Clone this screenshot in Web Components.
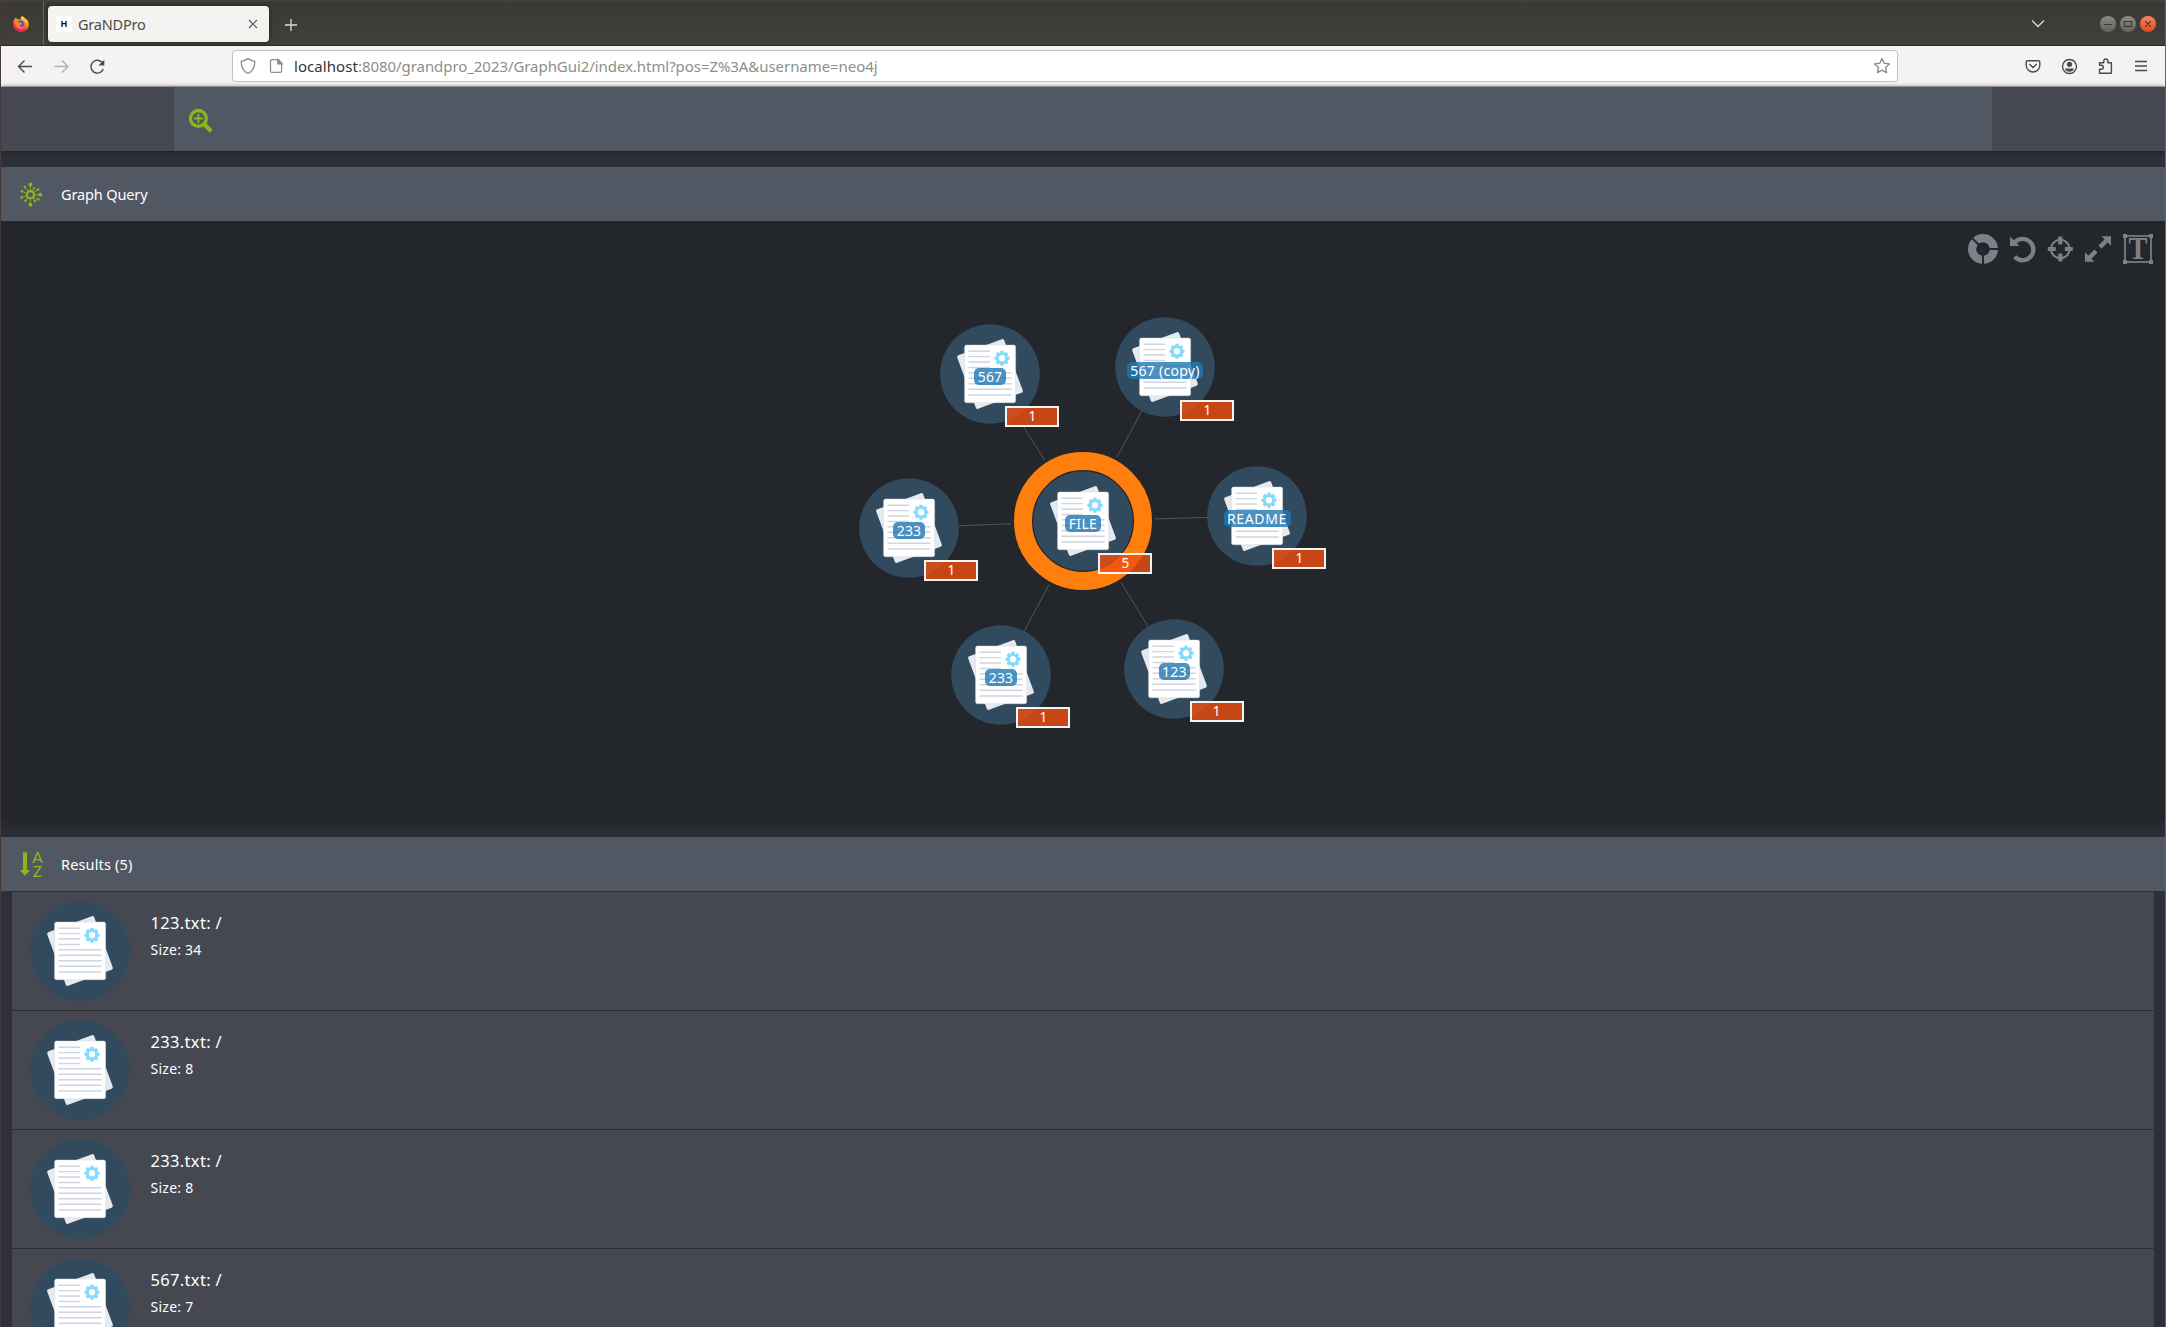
<!DOCTYPE html>
<html lang="en"><head><meta charset="utf-8"><title>GraNDPro</title>
<style>
html,body{margin:0;height:1327px;overflow:hidden;background:#2d3038}
body{font-family:"Noto Sans","Open Sans",sans-serif;font-size:14px;color:#fff}
</style></head><body>
<grand-app></grand-app>
<script>
const define=(name,html,setup)=>customElements.define(name,class extends HTMLElement{
  constructor(){super();this.attachShadow({mode:'open'})}
  connectedCallback(){this.shadowRoot.innerHTML=typeof html==='function'?html(this):html;if(setup)setup(this)}
});

/* One line of text, tracked to fill the width given in its w attribute. */
define('fit-text','<style>:host{display:inline-block;white-space:pre;line-height:20px}span{display:inline-block}</style><span><slot></slot></span>',el=>{
  const w=+el.getAttribute('w');if(!w)return;
  const s=el.shadowRoot.querySelector('span'),n=el.textContent.length;
  const real=s.getBoundingClientRect().width;
  s.style.letterSpacing=((w-real)/n)+'px';
});

const gear=()=>{let t='';for(let i=0;i<8;i++)t+=`<rect x="60.2" y="26.8" width="3.6" height="4" rx=".8" transform="rotate(${i*45} 62 34.3)"/>`;return t};
define('doc-icon',`<style>:host{display:block;width:100px;height:100px}svg{display:block}</style>
<svg width="100" height="100" viewBox="0 0 100 100"><circle cx="50" cy="50" r="49.8" fill="#324a5e"/>
<rect x="25" y="21.5" width="50" height="57" rx="1.8" fill="#e6e9ee" transform="rotate(-20.3 50 50)"/>
<rect x="24.6" y="21.1" width="51" height="57.6" rx="1.8" fill="#fff" stroke="#d5dbe2" stroke-width=".5"/>
<path d="M28.5 27.2H50M28.5 32.6H50M28.5 38H50M28.5 43.5H50M28.5 48.8H71.6M28.5 54.3H71.6M28.5 59.8H71.6M28.5 65.3H71.6M28.5 71H71.6" stroke="#ced5e0" stroke-width="1.4"/>
<g fill="#84dbff">${gear()}</g><circle cx="62" cy="34.3" r="4.6" fill="none" stroke="#84dbff" stroke-width="2.8"/></svg>`);

define('graph-node',el=>`<style>
:host{position:absolute;display:block;width:100px;height:100px;left:${el.getAttribute('x')-51}px;top:${el.getAttribute('y')-271}px}
.ring{position:absolute;left:-19px;top:-19px;width:102px;height:102px;border:18px solid #ff7f0e;border-radius:50%}
.label{position:absolute;left:0;right:0;top:44.3px;display:flex;justify-content:center}
.label fit-text{background:rgba(31,119,180,.8);border-radius:5px;height:17px;line-height:18px;padding:0 3.5px;font-size:14px}
.badge{position:absolute;left:15.3px;margin-left:50px;top:82.3px;width:50px;height:17px;border:2px solid #f3f5f5;background:rgba(240,79,18,.8);text-align:center;line-height:17.5px;font-size:13.5px}
</style>${el.hasAttribute('root')?'<div class="ring"></div>':''}<doc-icon></doc-icon>
<div class="label"><fit-text w="${el.getAttribute('w')}">${el.getAttribute('label')}</fit-text></div>
<div class="badge">${el.getAttribute('count')}</div>`);

const N=[['567',990,373.7,24.5],['567 (copy)',1165,367.3,69.5],['233',909,527.7,24.5],['README',1257,516,60],['233',1001,674.7,24.5],['123',1174.3,669,24.5]];
const C=[1083,521];
const edges=N.map(([l,x,y])=>{const dx=x-C[0],dy=y-C[1],d=Math.hypot(dx,dy),a=72/d,b=1-49/d;
 return `<line x1="${C[0]+dx*a-1}" y1="${C[1]+dy*a-221}" x2="${C[0]+dx*b-1}" y2="${C[1]+dy*b-221}"/>`}).join('');

define('graph-tools',`<style>:host{position:absolute;right:10px;top:12px;display:flex;gap:0}svg{display:block}</style>
<svg width="174" height="32" viewBox="1982 233 174 32" style="overflow:visible;color:#7d8088" fill="none" stroke="currentColor">
<g transform="translate(1 0)">
<g transform="translate(1983 249)"><circle r="10.9" stroke-width="8.2"/><path d="M0 0V17M0 0H17M0 0L-12.5-12.5" stroke="#23262a" stroke-width="2"/></g>
<g transform="translate(2022.7 249)"><path d="M-8.5-6A10.7 10.7 0 1 1-8 7.8" stroke-width="4.3"/><path d="M-12.7-12.5V-3H-3.3Z" fill="currentColor" stroke="none"/></g>
<g transform="translate(2060.3 249)"><circle r="9.3" stroke-width="2.1"/><path d="M0-12.5V-4.5M0 4.5V12.5M-12.5 0H-4.5M4.5 0H12.5" stroke-width="4.2"/></g>
<g transform="translate(2098 249)"><path d="M2-2L9-9M-9 9L-2 2" stroke-width="4.4"/><path d="M3.5-12.7H13V-3.2ZM-13 3.2V12.7H-3.5Z" fill="currentColor" stroke="none"/></g>
<g transform="translate(2138 249)"><rect x="-13" y="-13" width="26" height="26" stroke-width="1.7"/><path d="M-15-15h4v4h-4zM11-15h4v4h-4zM-15 11h4v4h-4zM11 11h4v4h-4z" fill="currentColor" stroke="none"/><text x="0" y="10.3" text-anchor="middle" textLength="19" lengthAdjust="spacingAndGlyphs" font-family="Liberation Serif" font-weight="700" font-size="32.5" fill="currentColor" stroke="none">T</text></g>
</g></svg>`);

define('graph-stage',`<style>:host{display:block;position:relative;height:600px;background:#23262a;box-shadow:0 2px 14px rgba(28,30,33,.9);flex:none;border-radius:0 0 4px 4px}.e{display:block}</style>
<svg class="e" width="2164" height="600" stroke="#54575b" stroke-width="1">${edges}</svg>
${N.map(([l,x,y,w])=>`<graph-node x="${x}" y="${y}" w="${w}" label="${l}" count="1"></graph-node>`).join('')}
<graph-node root x="1083" y="521" w="28.5" label="FILE" count="5"></graph-node><graph-tools></graph-tools>`);

define('panel-header',`<style>:host{display:flex;height:54px;background:#525863;align-items:center;flex:none;position:relative;z-index:1;font-size:14.5px}
.i{width:60px;display:flex;height:54px}</style><div class="i"><slot name="icon"></slot></div><slot></slot>`);

const spokes=[[0,-10.2,1.9],[9.9,0,1.9],[0,10,1.9],[7.7,-5.2,1.3],[3.7,-6.6,1.2],[-5.4,-7.6,1.3],[-8.6,-3.4,1.3],[-8.8,2.8,1.3],[-4.8,6,1.3],[4.4,6.2,1.3],[8,4.8,1.3]].map(([x,y,r])=>`<path d="M${x*.4} ${y*.4}L${x} ${y}" stroke="#8ab71c" stroke-width=".9"/><circle cx="${x}" cy="${y}" r="${r}" fill="#8ab71c"/>`).join('');
define('query-icon',`<svg width="60" height="54" viewBox="1 167 60 54"><g transform="translate(30.4 194.7)">${spokes}<circle r="3.6" fill="#525863" stroke="#8ab71c" stroke-width="2.2"/></g></svg>`);
define('sort-icon',`<svg width="60" height="54" viewBox="1 837 60 54" fill="#8ab71c"><path d="M23 852.3h4V870h3l-5 5.7-5-5.7h3z"/><g font-family="Lato" font-size="14.5" text-anchor="middle"><text x="37.6" y="863" textLength="10.6" lengthAdjust="spacingAndGlyphs">A</text><text x="37.6" y="876.7" textLength="9" lengthAdjust="spacingAndGlyphs">Z</text></g></svg>`);

define('result-item',el=>`<style>:host{display:flex;height:118px;border-bottom:1px solid #2d3038;background:#454850;flex:none}
doc-icon{margin:9.3px 0 0 18px}.t{display:flex;flex-direction:column;margin:21px 0 0 20.5px;align-items:flex-start}.a{font-size:16.5px}.b{font-size:14px;margin-top:7px}</style>
<doc-icon></doc-icon><div class="t"><fit-text class="a" w="71.5">${el.getAttribute('name')}: /</fit-text><fit-text class="b" w="${+el.getAttribute('size')>9?51:43}">Size: ${el.getAttribute('size')}</fit-text></div>`);

define('search-bar',`<style>:host{display:flex;height:64px;background:#454850;box-shadow:0 1px 5px #1c1e22;padding:0 173px;flex:none;position:relative}div{background:#525863;flex:1}svg{display:block}</style>
<div><svg width="60" height="64" viewBox="174 87 60 64" fill="none" stroke="#8ab71c"><circle cx="198.4" cy="118.4" r="7.9" stroke-width="3.3"/><path d="M204.5 124.5L210 130" stroke-width="4.2" stroke-linecap="round"/><path d="M198.4 114V123M194 118.5h9" stroke-width="1.9"/></svg></div>`);

define('browser-tabs',`<style>
:host{display:flex;height:45px;border-bottom:1px solid #282823;background:linear-gradient(#45443e 0,#3a3934 3px,#403f39 44px);flex:none;align-items:center;box-sizing:content-box}
.pin{width:42px;height:43px;margin-top:2px;border-right:1px solid #69675f;display:flex;align-items:center;justify-content:center}
.tab{margin:3px 0 0 4px;width:221px;height:36px;background:#f4f3f1;border-radius:4px;box-shadow:0 0 4px #1e1e1b;display:flex;align-items:center;color:#4d4d49;font-size:14.5px}
.fav{margin-left:8px;width:16px;height:16px;background:#fff;color:#111;font:bold 9px/16px "Noto Sans";text-align:center;margin-right:6px}
.sp{flex:1}svg{display:block}.x{margin-left:auto;margin-right:11px}</style>
<div class="pin"><svg width="18" height="18" viewBox="-9 -9 18 18" style="margin-left:-3px"><defs><linearGradient id="g" x1=".75" y1="0" x2=".3" y2="1"><stop stop-color="#fff44f"/><stop offset=".4" stop-color="#ff980e"/><stop offset=".7" stop-color="#ff3647"/><stop offset="1" stop-color="#e31587"/></linearGradient></defs><path d="M1-8C3-7 4-6 4.6-5C6-5 8-2 7.8 1C7.5 5 4 8 0 8C-5 8-8 4-8 0C-8-2-7-5-5-6.5L-4-4.4C-2-5-1-4.5-.4-4C-.5-6 0-7 1-8Z" fill="url(#g)"/><circle cx="-.2" cy="0" r="3.7" fill="#7847d8"/><path d="M-6-2C-3-3-2-1 1-1C1 1-2 1-2 2C0 4 3 3 4 1C4 4 0 6-3 4C-5 3-6 0-6-2Z" fill="#ff8a16"/></svg></div>
<div class="tab"><div class="fav">H</div><fit-text w="67.5">GraNDPro</fit-text><svg class="x" width="10" height="10" viewBox="0 0 10 10" stroke="#5a5a55" stroke-width="1.2"><path d="M1 1L9 9M9 1L1 9"/></svg></div>
<svg style="margin:4px 0 0 14.5px" width="14" height="14" stroke="#dddcd5" stroke-width="1.3"><path d="M7 1V13M1 7H13"/></svg>
<div class="sp"></div>
<svg style="margin-top:2px" width="135" height="20" viewBox="2030 14 135 20" fill="none"><defs><linearGradient id="c" x2="0" y2="1"><stop stop-color="#8b8a84"/><stop offset="1" stop-color="#63625c"/></linearGradient><linearGradient id="d" x2="0" y2="1"><stop stop-color="#f58563"/><stop offset="1" stop-color="#e34a17"/></linearGradient></defs><path d="M2032 20.5l6 6 6-6" stroke="#dddcd5" stroke-width="1.3"/><circle cx="2108" cy="24" r="8" fill="url(#c)"/><circle cx="2128" cy="24" r="8" fill="url(#c)"/><circle cx="2148" cy="24" r="8" fill="url(#d)"/><path d="M2104 24.5h8M2124.5 21.5h7v5h-7zM2145.2 21.2l5.6 5.6M2150.8 21.2l-5.6 5.6" stroke="#3a3934" stroke-width="1.1"/></svg>`);

define('browser-toolbar',`<style>
:host{display:flex;height:40px;border-bottom:1px solid #c2c0bc;background:#f4f3f1;flex:none;align-items:center;color:#4b4a47}
svg{display:block;flex:none}.url{box-sizing:border-box;width:1666px;height:32px;border:1px solid #c2bfba;border-radius:4px;background:#fff;display:flex;align-items:center;font-size:15px;color:#8e8e8b}
b{font-weight:400;color:#333}.star{margin-left:auto;margin-right:6px}</style>
<svg width="231" height="40" viewBox="1 46 231 40" fill="none" stroke="currentColor" stroke-width="1.4"><path d="M32 66.5H18.5M24.5 60.5l-6 6 6 6"/><path d="M54.5 66.5H68M62 60.5l6 6-6 6" stroke="#b3b2af"/><path d="M103.2 64.2A6.4 6.4 0 1 0 103.3 69"/><path d="M98.5 65.5H104.3V59.8Z" fill="currentColor" stroke="none"/></svg>
<div class="url"><svg width="61" height="30" viewBox="233 51 61 30" fill="none" stroke="currentColor" stroke-width="1.3"><path d="M248 58.6Q251 60.6 254.8 61.3C255 67 253.2 71 248 73.5C242.8 71 241 67 241.2 61.3Q245 60.6 248 58.6Z"/><path d="M271.8 59.7H278.5L281.6 63V71a1.3 1.3 0 0 1-1.3 1.3H271.8a1.3 1.3 0 0 1-1.3-1.3V61a1.3 1.3 0 0 1 1.3-1.3Z"/><path d="M277.7 59.5V63.8H282Z" fill="currentColor"/></svg>
<fit-text w="64"><b>localhost</b></fit-text><fit-text w="519.5">:8080/grandpro_2023/GraphGui2/index.html?pos=Z%3A&amp;username=neo4j</fit-text>
<svg class="star" width="18" height="18" viewBox="-9 -9 18 18" fill="none" stroke="currentColor" stroke-width="1.4" stroke-linejoin="round"><path d="M0-7.4L2.2-2.7L7.4-2.1L3.5 1.5L4.5 6.7L0 4.1L-4.5 6.7L-3.5 1.5L-7.4-2.1L-2.2-2.7Z"/></svg></div>
<svg width="267" height="40" viewBox="1898 46 267 40" fill="none" stroke="currentColor" stroke-width="1.4"><path d="M2027.5 60.7H2038.5a1.3 1.3 0 0 1 1.3 1.3V65.2a6.8 6.8 0 0 1-13.6 0V62a1.3 1.3 0 0 1 1.3-1.3ZM2029.3 64l3.7 3.5 3.7-3.5"/><circle cx="2069.5" cy="66.5" r="7"/><g fill="currentColor" stroke="none"><circle cx="2069.5" cy="64.3" r="2.6"/><path d="M2065 68.5h9c0 2-2 3.2-4.5 3.2s-4.5-1.2-4.5-3.2z"/></g><path d="M2099.5 73.3V69.3h1.8a2 2 0 0 0 0-4H2099.5V62.8H2103.8V61a2 2 0 0 1 4 0V62.8H2111.4V73.3Z" stroke-linejoin="round"/><path d="M2135 61.5h12M2135 66h12M2135 70.5h12"/></svg>`);

define('grand-app',`<style>:host{display:flex;flex-direction:column;width:2164px;height:1327px;overflow:hidden;border-left:1px solid #46393a;border-right:1px solid #66645f;background:#2d3038}
.gap{height:16px;flex:none}.list{margin:1px 11px 0;display:flex;flex-direction:column;flex:none}panel-header fit-text{margin-top:-1px}</style>
<browser-tabs></browser-tabs><browser-toolbar></browser-toolbar>
<search-bar></search-bar><div class="gap"></div>
<panel-header><query-icon slot="icon"></query-icon><fit-text w="86.5">Graph Query</fit-text></panel-header>
<graph-stage></graph-stage><div class="gap"></div>
<panel-header><sort-icon slot="icon"></sort-icon><fit-text w="71.5">Results (5)</fit-text></panel-header>
<div class="list"><result-item name="123.txt" size="34"></result-item><result-item name="233.txt" size="8"></result-item><result-item name="233.txt" size="8"></result-item><result-item name="567.txt" size="7"></result-item></div>`);
</script></body></html>
